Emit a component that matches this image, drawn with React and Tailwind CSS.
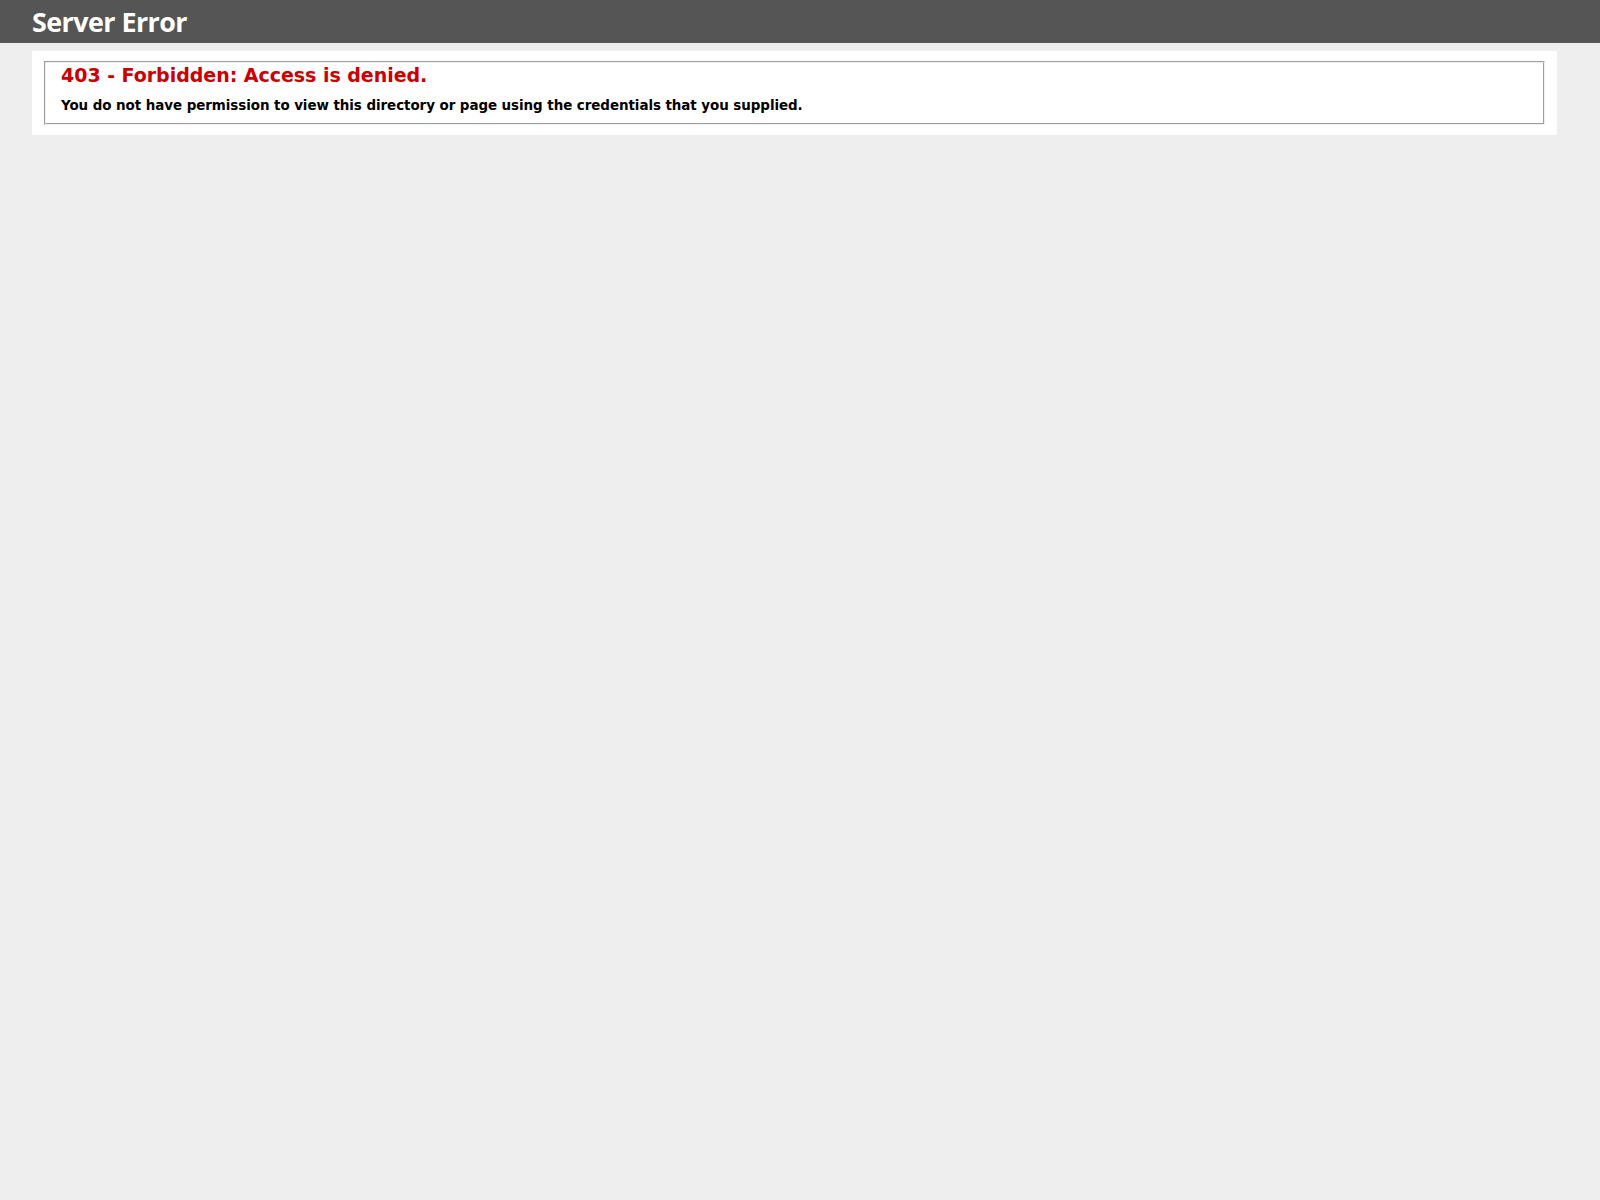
export default function App() {
  return (
    <div className="min-h-[1200px] bg-[#eeeeee] text-[11.2px] font-['Verdana','DejaVu_Sans',sans-serif]">
      <div className="box-content w-[96%] bg-[#555555] px-[2%] py-[6px] text-white font-['Trebuchet_MS','Open_Sans',sans-serif]">
        <h1 className="m-0 text-[26.88px] font-bold leading-[31px] tracking-[-0.55px]">Server Error</h1>
      </div>
      <div className="relative ml-[2%]">
        <div className="relative mt-[8px] box-content w-[96%] bg-white p-[10px]">
          <fieldset className="mx-[2px] border-2 border-[#f0f0f0] [border-style:groove] px-[15px] pb-[9px] pt-0">
            <h2 className="m-0 pt-[1px] text-[19.04px] font-bold leading-[23px] text-[#cc0000] tracking-[-0.05px]">403 - Forbidden: Access is denied.</h2>
            <h3 className="mt-[10px] pt-[1px] text-[13.44px] font-bold leading-[16px] text-black tracking-[-0.06px]">You do not have permission to view this directory or page using the credentials that you supplied.</h3>
          </fieldset>
        </div>
      </div>
    </div>
  );
}
